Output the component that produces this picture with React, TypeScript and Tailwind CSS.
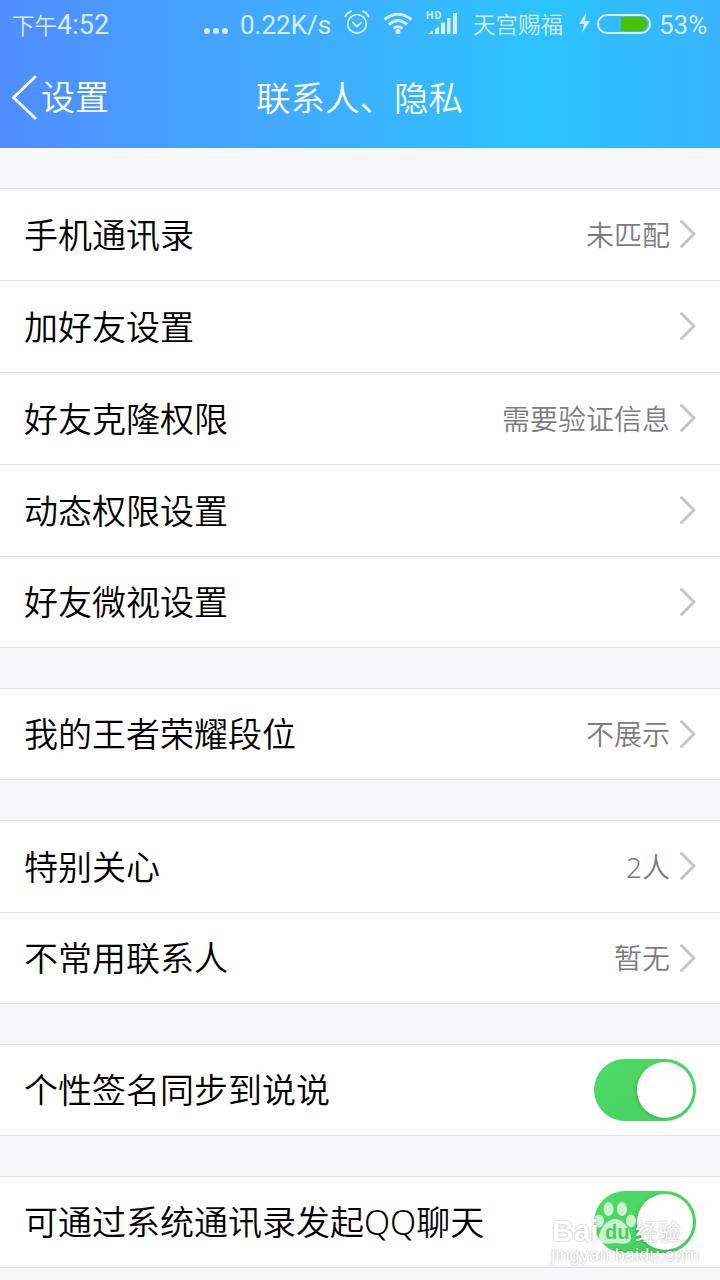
const FONT = "font-['Noto_Sans','Noto_Sans_CJK_SC',sans-serif]";
const STATUS = "#d6edff";

interface RowData {
  label: string;
  value?: string;
  toggle?: boolean;
}

const groups: RowData[][] = [
  [
    { label: "手机通讯录", value: "未匹配" },
    { label: "加好友设置" },
    { label: "好友克隆权限", value: "需要验证信息" },
    { label: "动态权限设置" },
    { label: "好友微视设置" },
  ],
  [{ label: "我的王者荣耀段位", value: "不展示" }],
  [
    { label: "特别关心", value: "2人" },
    { label: "不常用联系人", value: "暂无" },
  ],
  [{ label: "个性签名同步到说说", toggle: true }],
  [{ label: "可通过系统通讯录发起QQ聊天", toggle: true }],
];

function Chevron() {
  return (
    <svg width="18" height="30" viewBox="0 0 18 30" className="ml-[8px] mb-[1px] shrink-0">
      <path d="M3.5 2.5 L16 15 L3.5 27.5" fill="none" stroke="#c6c6c8" strokeWidth="3" strokeLinecap="round" strokeLinejoin="round" />
    </svg>
  );
}

function Toggle() {
  return (
    <div className="w-[102px] h-[62px] rounded-full bg-gradient-to-br from-[#4fdb67] to-[#45cf5d] p-[3px] flex justify-end shrink-0">
      <div className="w-[56px] h-[56px] rounded-full bg-white shadow-[-2px_1px_3px_rgba(0,0,0,0.1)]" />
    </div>
  );
}

function Row({ label, value, toggle }: RowData) {
  return (
    <div className="h-[92px] last:h-[91px] border-b border-[#dfdfe2] flex items-center pl-[24px] pr-[24px] bg-white font-[350]">
      <span className="flex-1 text-[34px] leading-none text-[#000000]">{label}</span>
      {value && <span className="text-[28px] leading-none text-[#7c7c7c]">{value}</span>}
      {toggle ? <Toggle /> : <Chevron />}
    </div>
  );
}

function StatusBar() {
  return (
    <div className="h-[50px] flex items-center pl-[12px] pr-[12px] leading-none text-[#d6edff] font-['Roboto','Noto_Sans_CJK_SC',sans-serif]">
      <span className="w-[192px] text-[27px] whitespace-nowrap shrink-0">
        <span className="text-[22.5px] font-[350]">下午</span>4:52
      </span>
      <span className="flex gap-[3px] items-center mt-[12px] w-[36px] shrink-0">
        <i className="w-[6px] h-[6px] rounded-full bg-[#d6edff]" />
        <i className="w-[6px] h-[6px] rounded-full bg-[#d6edff]" />
        <i className="w-[6px] h-[6px] rounded-full bg-[#d6edff]" />
      </span>
      <span className="w-[104px] text-[26px] shrink-0">0.22K/s</span>
      {/* 鬧鐘 */}
      <svg width="26" height="26" viewBox="0 0 28 28" className="mb-[4px] shrink-0" fill="none" stroke={STATUS} strokeWidth="1.9">
        <circle cx="14" cy="15" r="10" />
        <path d="M9.5 13.5 L14 18 L18.5 13.5" strokeLinecap="round" strokeLinejoin="round" />
        <path d="M1.5 7 Q3 3 7.5 1.5 M26.5 7 Q25 3 20.5 1.5" strokeLinecap="round" strokeWidth="2.2" />
      </svg>
      {/* wifi */}
      <svg width="30" height="22" viewBox="0 0 30 22" className="ml-[13px] mb-[4px] shrink-0" fill="none" stroke={STATUS} strokeWidth="3">
        <path d="M1.5 7.5 Q15 -3 28.5 7.5" />
        <path d="M6 12.5 Q15 4.5 24 12.5" />
        <path d="M10.5 16.5 Q15 13 19.5 16.5" />
        <circle cx="15" cy="19.5" r="2.5" fill={STATUS} stroke="none" />
      </svg>
      {/* 訊號 */}
      <svg width="31" height="24" viewBox="0 0 31 24" className="ml-[14px] mb-[5px] shrink-0 overflow-visible" fill={STATUS}>
        <text x="-1" y="7.5" fontSize="10.5" fontWeight="700" letterSpacing="1" fontFamily="Roboto, sans-serif" fill={STATUS}>HD</text>
        <path d="M1 23 L6 19.5 V23 Z" />
        <path d="M8 18.5 L12 15.5 V23 H8 Z" />
        <rect x="14" y="11.5" width="4" height="11.5" />
        <rect x="20" y="7" width="3.5" height="16" />
        <rect x="26" y="2" width="4" height="21" />
      </svg>
      <span className="ml-[15px] text-[22.5px] w-[105px] shrink-0 font-[350]">天宫赐福</span>
      <svg width="13" height="20" viewBox="0 0 13 20" className="shrink-0 mb-[4px]" fill={STATUS}>
        <path d="M8 0 L1 11 H6 L4 20 L12 8 H7 Z" />
      </svg>
      <div className="ml-[6px] w-[54px] h-[20px] rounded-full border-2 border-[#d6edff] py-[1px] pr-[2px] flex justify-end mb-[3px] shrink-0">
        <div className="w-[26px] h-[14px] rounded-r-full bg-[#4bc000]" />
      </div>
      <span className="ml-[8px] text-[26px]">53%</span>
    </div>
  );
}

function Watermark() {
  const outline = "[text-shadow:0_0_2px_rgba(0,0,0,0.4)]";
  return (
    <div className="absolute left-[551px] top-[1200px] w-[132px] h-[64px] text-white pointer-events-none font-['Liberation_Sans',sans-serif]">
      <svg width="44" height="50" viewBox="0 0 44 50" className="absolute left-[42px] top-0" fill="#ffffff" fillOpacity="0.7">
        <ellipse cx="6" cy="21" rx="5" ry="6.5" />
        <ellipse cx="15.5" cy="9" rx="5" ry="7" />
        <ellipse cx="29" cy="9" rx="5" ry="7" />
        <ellipse cx="38" cy="21" rx="5" ry="6.5" />
        <path d="M22 19 C30 19 38 30 38 37 C38 45 30 44 22 43 C14 44 6 45 6 37 C6 30 14 19 22 19 Z" />
      </svg>
      <span className={`absolute left-[1px] top-[17px] text-[30px] leading-[28px] font-bold ${outline}`}>Bai</span>
      <span className="absolute left-[54px] top-[22px] text-[20px] leading-[20px] font-bold text-[#45cf5d]">du</span>
      <span className={`absolute left-[84px] top-[18px] text-[23px] leading-[24px] font-['Noto_Sans_CJK_SC',sans-serif] ${outline}`}>经验</span>
      <span className={`absolute left-0 top-[46px] text-[18px] leading-[18px] whitespace-nowrap tracking-[0.2px] ${outline}`}>jingyan.baidu.com</span>
    </div>
  );
}

export default function App() {
  return (
    <div className={`${FONT} relative w-[720px] h-[1280px] overflow-hidden bg-[#f8f8fa]`}>
      <header className="h-[148px] bg-gradient-to-r from-[#4f8dff] via-[#2ac3ff] via-75% to-[#38b3ff]">
        <StatusBar />
        <div className="h-[98px] relative flex items-center justify-center text-white font-[350]">
          <div className="absolute left-[11px] top-[25px] flex items-center">
            <svg width="26" height="46" viewBox="0 0 26 46">
              <path d="M24 2 L2.5 22.5 L24 43" fill="none" stroke="#ffffff" strokeWidth="3" strokeLinecap="round" strokeLinejoin="round" />
            </svg>
            <span className="ml-[4px] text-[34px] leading-none mb-[2px]">设置</span>
          </div>
          <span className="text-[34.5px] leading-none mb-[2px] mr-[1px]">联系人、隐私</span>
        </div>
      </header>
      <div className="flex flex-col gap-[40px] pt-[40px]">
        {groups.map((rows, i) => (
          <div key={i} className="border-t border-[#dfdfe2]">
            {rows.map(r => (
              <Row key={r.label} {...r} />
            ))}
          </div>
        ))}
      </div>
      <Watermark />
    </div>
  );
}
